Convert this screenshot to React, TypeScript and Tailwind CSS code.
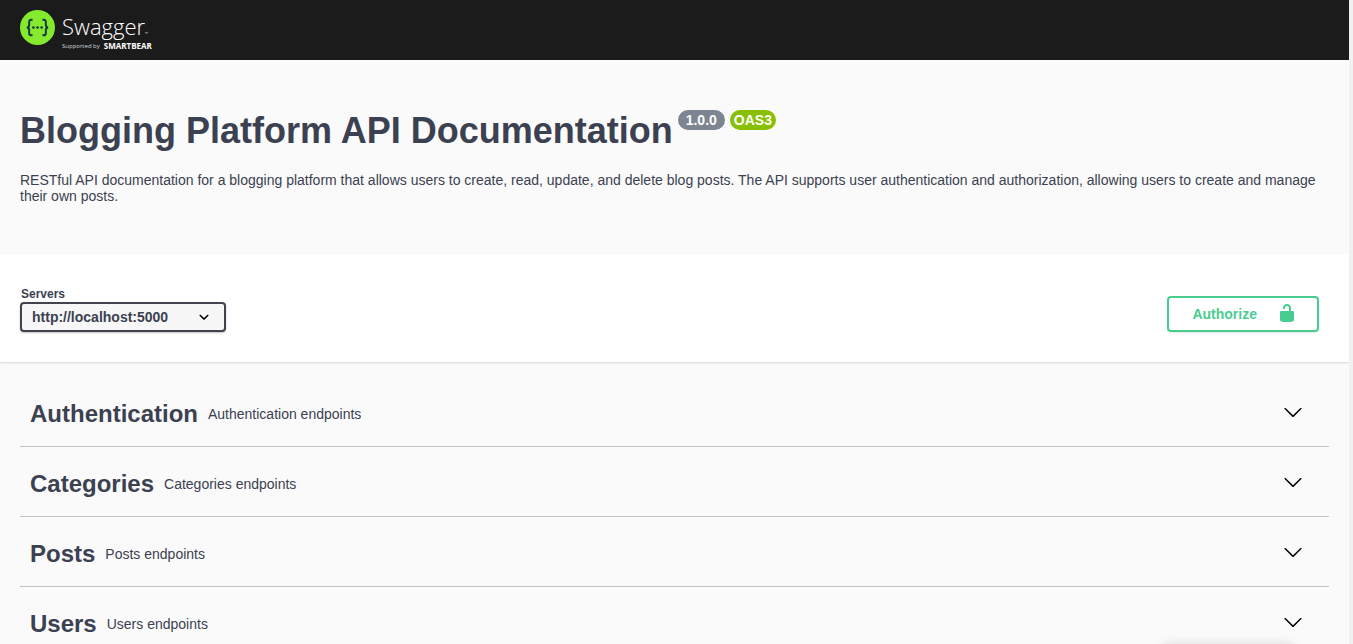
import React, { useState } from "react";

type Tag = { name: string; description: string };

const tags: Tag[] = [
  { name: "Authentication", description: "Authentication endpoints" },
  { name: "Categories", description: "Categories endpoints" },
  { name: "Posts", description: "Posts endpoints" },
  { name: "Users", description: "Users endpoints" },
];

function Logo() {
  return (
    <a href="#" aria-label="Swagger, supported by SmartBear" className="flex items-start gap-[7px] text-white">
      <svg viewBox="0 0 34 34" className="size-[35px]" aria-hidden="true">
        <circle cx="17" cy="17" r="17" fill="#85ea2d" />
        <g fill="none" stroke="#173647" strokeWidth="1.9">
          <path d="M12.2 9.4h-1.1c-1.6 0-2.2.8-2.2 2.3v2.7c0 1.7-.7 2.6-2.3 2.6 1.6 0 2.3.9 2.3 2.6v2.7c0 1.5.6 2.3 2.2 2.3h1.1" />
          <path d="M21.8 9.4h1.1c1.6 0 2.2.8 2.2 2.3v2.7c0 1.7.7 2.6 2.3 2.6-1.6 0-2.3.9-2.3 2.6v2.7c0 1.5-.6 2.3-2.2 2.3h-1.1" />
        </g>
        <g fill="#173647">
          <circle cx="13" cy="17" r="1.3" />
          <circle cx="17" cy="17" r="1.3" />
          <circle cx="21" cy="17" r="1.3" />
        </g>
      </svg>
      <span className="flex flex-col pt-0.5 font-['Open_Sans',sans-serif]">
        <span className="flex items-end text-[22px] leading-7 font-light">
          Swagger<span className="text-[4px] leading-[12px]">™</span>
        </span>
        <span className="flex items-center gap-1 leading-3">
          <span className="text-[6px] text-gray-300">Supported by</span>
          <span className="text-[8px] font-bold">SMARTBEAR</span>
        </span>
      </span>
    </a>
  );
}

function TagSection({ name, description }: Tag) {
  const [open, setOpen] = useState(false);
  return (
    <section className="border-b border-[#3b4151]/30">
      <h3>
        <button
          type="button"
          aria-expanded={open}
          onClick={() => setOpen(!open)}
          className="flex h-[69px] w-full items-center pr-[26px] pl-2.5 text-left"
        >
          <span className="pt-1 text-2xl font-bold">{name}</span>
          <span className="flex-1 px-2.5 pt-1 text-sm">{description}</span>
          <svg viewBox="0 0 20 20" className="size-5" fill="#000" aria-hidden="true">
            <path d="M17.418 6.109c.272-.268.709-.268.979 0s.271.701 0 .969l-7.908 7.83c-.27.268-.707.268-.979 0l-7.908-7.83c-.27-.268-.27-.701 0-.969.271-.268.709-.268.979 0L10 13.25l7.418-7.141z" />
          </svg>
        </button>
      </h3>
    </section>
  );
}

export default function App() {
  return (
    <div className="flex h-screen overflow-hidden bg-[#f1f1f1] pr-1 font-['Liberation_Sans',Arial,sans-serif] text-[#3b4151]">
      <div className="relative min-w-0 flex-1 overflow-hidden bg-[#fafafa]">
        <header className="h-[60px] bg-[#1b1b1b] px-5 pt-2.5">
          <Logo />
        </header>

        <section className="px-5 pt-[50px] pb-[50px]">
          <div className="flex items-start gap-[5px]">
            <h1 className="text-4xl leading-[42px] font-bold">Blogging Platform API Documentation</h1>
            <div className="flex gap-[5px] text-sm leading-5 font-bold text-white">
              <span className="rounded-full bg-[#7d8492] px-2">1.0.0</span>
              <span className="rounded-full bg-[#89bf04] px-1">OAS3</span>
            </div>
          </div>
          <p className="mt-5 text-sm leading-4">
            RESTful API documentation for a blogging platform that allows users to create, read, update, and delete
            blog posts. The API supports user authentication and authorization, allowing users to create and manage
            their own posts.
          </p>
        </section>

        <section className="flex items-end justify-between bg-white px-5 py-[30px] pr-[30px] shadow-[0_1px_2px_0_rgba(0,0,0,0.15)]">
          <div className="flex flex-col">
            <label htmlFor="server" className="pt-0.5 pl-px text-xs leading-4 font-bold">
              Servers
            </label>
            <div className="grid items-center">
              <select
                id="server"
                className="col-start-1 row-start-1 h-[30px] w-[206px] appearance-none rounded border-2 border-[#41444e] bg-[#f7f7f7] pr-10 pl-2.5 text-sm font-bold shadow-[0_1px_2px_0_rgba(0,0,0,0.25)]"
              >
                <option>http://localhost:5000</option>
              </select>
              <svg
                viewBox="0 0 20 20"
                className="pointer-events-none col-start-1 row-start-1 mr-3 size-5 justify-self-end"
                fill="#000"
                aria-hidden="true"
              >
                <path d="M13.418 7.859c.271-.268.709-.268.978 0 .27.268.272.701 0 .969l-3.908 3.83c-.27.268-.707.268-.979 0l-3.908-3.83c-.27-.267-.27-.701 0-.969.271-.268.709-.268.978 0L10 11l3.418-3.141z" />
              </svg>
            </div>
          </div>
          <button
            type="button"
            className="flex h-9 items-center gap-5 rounded border-2 border-[#49cc90] px-[23px] pr-5 text-sm font-bold text-[#49cc90] shadow-[0_1px_2px_0_rgba(0,0,0,0.1)]"
          >
            Authorize
            <svg viewBox="0 1 20 20" className="size-5" fill="currentColor" aria-hidden="true">
              <path d="M15.8 8H14V5.6C14 2.703 12.665 1 10 1 7.334 1 6 2.703 6 5.6V6h2v-.801C8 3.754 8.797 3 10 3c1.203 0 2 .754 2 2.199V8H4c-.553 0-1 .646-1 1.199V17c0 .549.428 1.139.951 1.307l1.197.387C5.672 18.861 6.55 19 7.1 19h5.8c.549 0 1.428-.139 1.951-.307l1.196-.387c.524-.167.953-.757.953-1.306V9.199C17 8.646 16.352 8 15.8 8z" />
            </svg>
          </button>
        </section>

        <main className="px-5 pt-[15px]">
          {tags.map((tag) => (
            <TagSection key={tag.name} {...tag} />
          ))}
        </main>

        <div className="absolute top-full right-14 h-8 w-32 shadow-[0_2px_12px_rgba(0,0,0,0.2)]" />
      </div>
    </div>
  );
}
